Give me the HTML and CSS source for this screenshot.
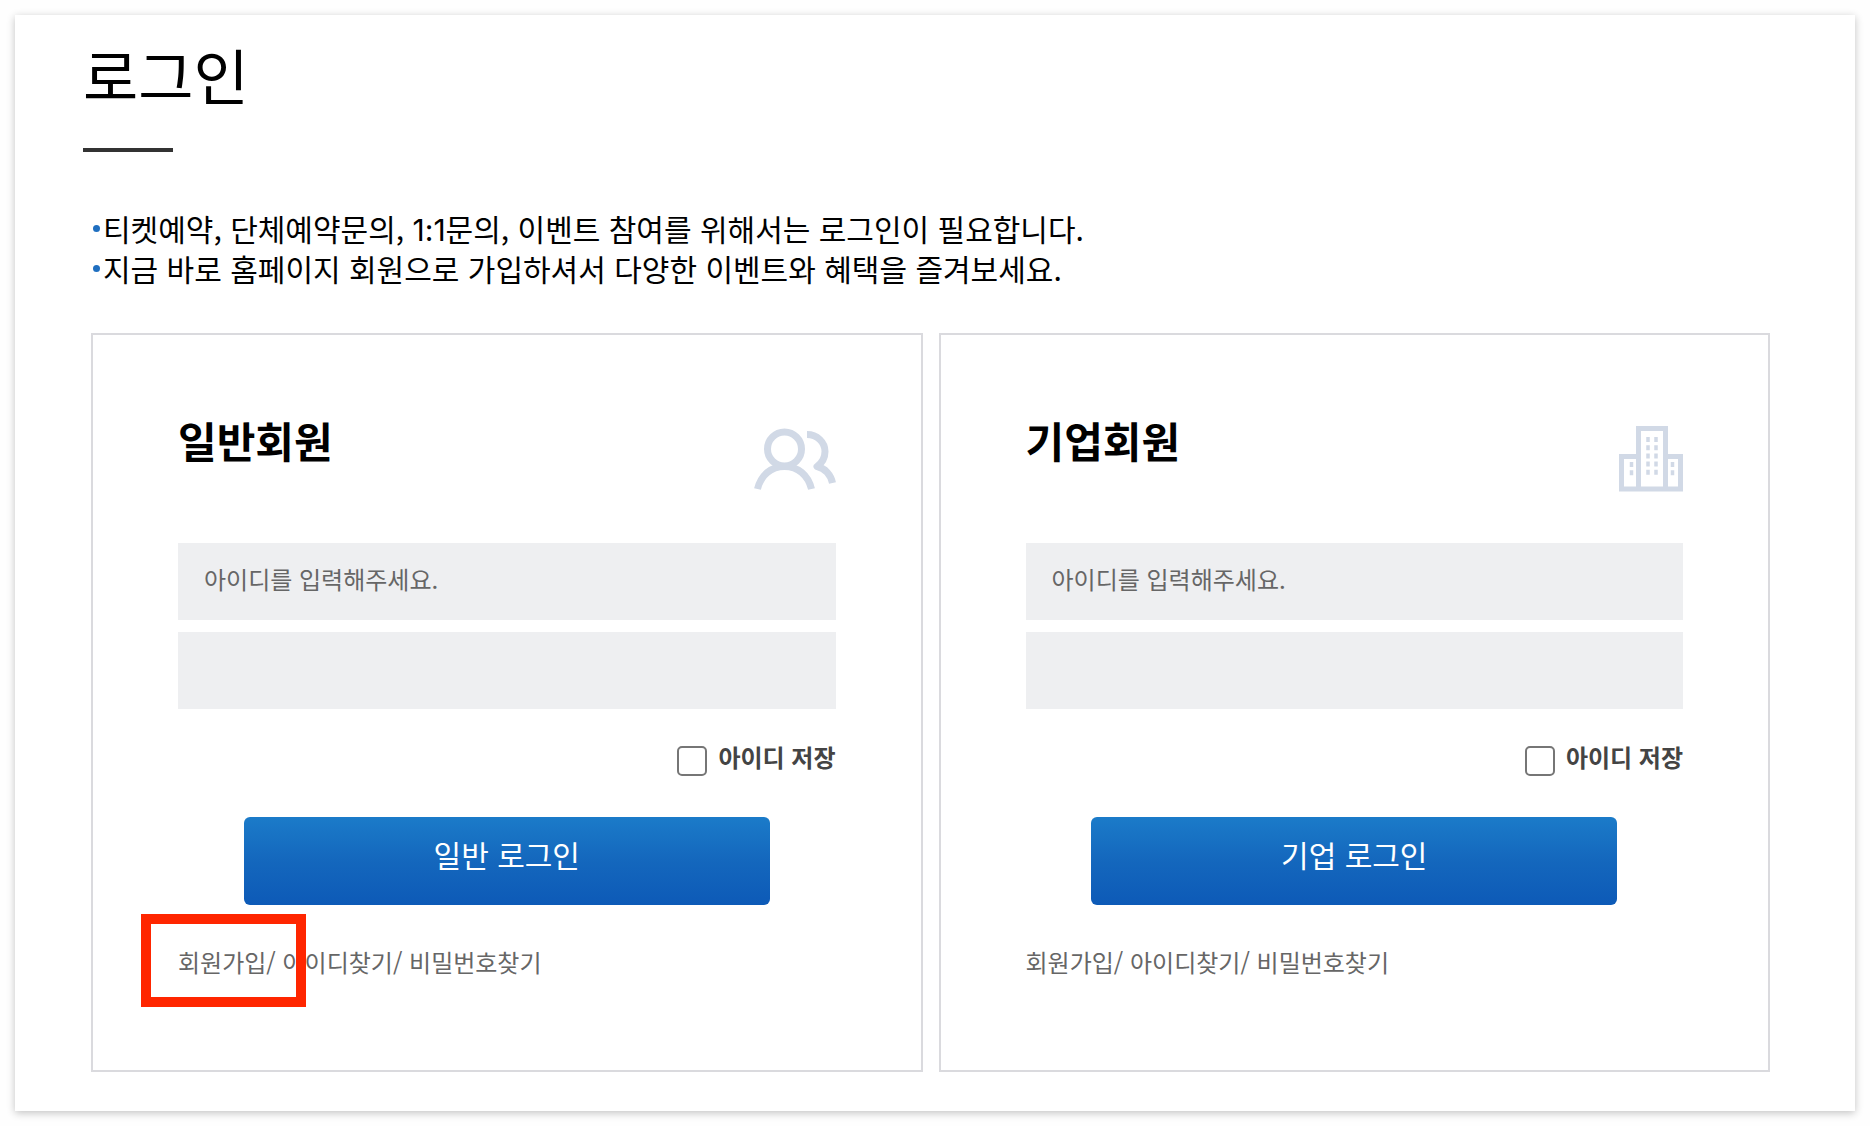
FILE: index.html
```html
<!DOCTYPE html>
<html lang="ko">

<head>
    <meta charset="UTF-8">
    <meta name="viewport" content="width=device-width, initial-scale=1.0">
    <title>로그인</title>
    <link rel="stylesheet" href="styles.css">
</head>

<body>

    <main class="sheet">
        <h1 class="page-title">로그인</h1>

        <ul class="notice">
            <li>티켓예약, 단체예약문의, <span class="num">1:1</span>문의, 이벤트 참여를 위해서는 로그인이 필요합니다.</li>
            <li>지금 바로 홈페이지 회원으로 가입하셔서 다양한 이벤트와 혜택을 즐겨보세요.</li>
        </ul>

        <div class="login-boxes">
            <section class="login-box">
                <header>
                    <h2>일반회원</h2>
                    <svg class="icon" width="82" height="66" viewBox="0 0 82 60" aria-hidden="true">
                        <g fill="none" stroke="#d1d9e6" stroke-width="7">
                            <circle cx="30.500" cy="20" r="17" />
                            <path d="M3.500 60C7 46 17 37.500 30.500 37.500S54 46 57.500 60" />
                            <path d="M53 5.500C63 5.500 71 13 71 22.500C71 29 68 34 63 37.500C71 39 77 46 78.500 54" stroke-linejoin="round" />
                        </g>
                    </svg>
                </header>
                <form>
                    <input class="field" type="text" placeholder="아이디를 입력해주세요." aria-label="아이디">
                    <input class="field" type="password" aria-label="비밀번호">
                    <div class="save-id">
                        <input type="checkbox" id="save-general">
                        <label for="save-general">아이디 저장</label>
                    </div>
                    <button class="btn-login" type="button">일반 로그인</button>
                </form>
                <p class="links">
                    <a class="marked" href="#">회원가입</a>/ <a href="#">아이디찾기</a>/ <a href="#">비밀번호찾기</a>
                </p>
            </section>

            <section class="login-box">
                <header>
                    <h2>기업회원</h2>
                    <svg class="icon" width="64" height="66" viewBox="0 0 64 66" aria-hidden="true">
                        <g fill="none" stroke="#d1d9e6" stroke-width="5">
                            <path d="M19.500 63V2.500H46.500V63" />
                            <path d="M19.500 30.500H2.500V63H61.500V30.500H46.500" />
                        </g>
                        <path d="M29 11v40M37 11v40M12.500 36v16M53.500 36v16" fill="none" stroke="#d1d9e6" stroke-width="3.500" stroke-dasharray="5 3.200" />
                    </svg>
                </header>
                <form>
                    <input class="field" type="text" placeholder="아이디를 입력해주세요." aria-label="아이디">
                    <input class="field" type="password" aria-label="비밀번호">
                    <div class="save-id">
                        <input type="checkbox" id="save-company">
                        <label for="save-company">아이디 저장</label>
                    </div>
                    <button class="btn-login" type="button">기업 로그인</button>
                </form>
                <p class="links">
                    <a href="#">회원가입</a>/ <a href="#">아이디찾기</a>/ <a href="#">비밀번호찾기</a>
                </p>
            </section>
        </div>
    </main>

</body>

</html>
```
FILE: styles.css
```css
*,
*::before,
*::after {
  box-sizing: border-box;
}

body {
  margin: 0;
  padding: 15px;
  background-color: #fefefe;
  color: #000;
  font-family: "Noto Sans CJK KR", sans-serif;
}

h1,
h2,
p,
ul {
  margin: 0;
  padding: 0;
}

.sheet {
  padding: 19px 77px 39px 68px;
  background-color: #fff;
  box-shadow: 0 2px 8px rgba(0, 0, 0, 0.24);
}

.page-title {
  font-size: 60px;
  font-weight: 400;
  line-height: 80px;
}

.page-title::after {
  content: "";
  display: block;
  width: 90px;
  height: 4px;
  margin-top: 34px;
  background-color: #333;
}

.notice {
  margin: 56px 0 45px 8px;
  padding-left: 2px;
  list-style: none;
  font-size: 30px;
  line-height: 40px;
}

.notice li::before {
  content: "";
  display: inline-block;
  width: 7px;
  height: 7px;
  margin-right: 3px;
  border-radius: 50%;
  background-color: #1f6fc0;
  vertical-align: 9px;
}

.num {
  font-family: Inter, sans-serif;
  line-height: 1;
}

/* login boxes */
.login-boxes {
  display: flex;
  gap: 16px;
  margin: 0 8px;
}

.login-box {
  flex: 1;
  padding: 77px 85px 92px;
  border: 2px solid #dadade;
}

.login-box > header {
  display: flex;
  justify-content: space-between;
  height: 131px;
}

.login-box h2 {
  font-size: 42px;
  font-weight: 700;
  line-height: 56px;
}

.icon {
  margin-top: 14px;
}

.field {
  display: block;
  width: 100%;
  height: 77px;
  margin-bottom: 12px;
  padding: 0 26px 6px;
  border: 0;
  border-radius: 0;
  background-color: #eeeff1;
  font: inherit;
  font-size: 24px;
}

.field::placeholder {
  color: #666;
}

.save-id {
  display: flex;
  justify-content: flex-end;
  align-items: flex-end;
  gap: 11px;
  margin-top: 34px;
  color: #444;
  font-size: 24px;
  font-weight: 700;
}

.save-id label {
  padding-bottom: 5px;
  line-height: 28px;
}

.save-id input {
  appearance: none;
  width: 30px;
  height: 30px;
  margin: 0;
  border: 2px solid #767676;
  border-radius: 5px;
  background-color: #fff;
}

.btn-login {
  display: block;
  width: 80%;
  height: 88px;
  margin: 41px auto 0;
  padding: 0 0 14px;
  border: 0;
  border-radius: 6px;
  background: linear-gradient(#1b7bc9, #1467bd 50%, #0d5ab7);
  color: #fff;
  font: inherit;
  font-size: 30px;
}

.links {
  margin-top: 41px;
  color: #666;
  font-size: 24px;
  line-height: 32px;
}

.links a {
  color: inherit;
  text-decoration: none;
}

/* red highlight around the sign-up link */
.marked {
  position: relative;
}

.marked::after {
  content: "";
  position: absolute;
  top: -30px;
  left: -37px;
  width: 165px;
  height: 93px;
  border: 10px solid #ff2600;
}
```
